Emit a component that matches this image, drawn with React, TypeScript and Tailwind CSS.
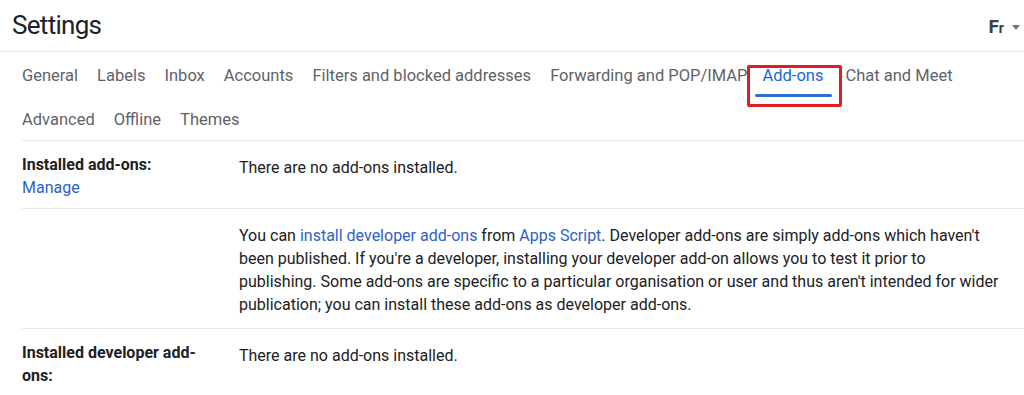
import { ReactNode } from "react"

const tabs = [
  "General",
  "Labels",
  "Inbox",
  "Accounts",
  "Filters and blocked addresses",
  "Forwarding and POP/IMAP",
  "Add-ons",
  "Chat and Meet",
  "Advanced",
  "Offline",
  "Themes",
]

function Row({ label, children, last }: { label: ReactNode; children: ReactNode; last?: boolean }) {
  return (
    <div className={`flex text-[16px] leading-[23px] ${last ? "" : "border-b border-[#e8e8e8]"}`}>
      <div className="w-[217px] shrink-0 pr-[30px] pt-[12px] pb-[9px]">{label}</div>
      <div className="flex-1 pr-[19px] pt-[15px] pb-[12px] text-[#202124]">{children}</div>
    </div>
  )
}

export default function App() {
  return (
    <div className="h-[395px] w-[1024px] overflow-hidden bg-white font-['Roboto',sans-serif]">
      <header className="flex h-[52px] items-center justify-between border-b border-[#ececec] pl-[12px] pr-[4px]">
        <h1 className="text-[26px] font-normal tracking-[-0.7px] text-[#202124]">Settings</h1>
        <div className="flex items-center gap-[8px] pt-[4px]">
          <span className="text-[19px] font-bold text-[#3c4043]">F<span className="text-[14px]">r</span></span>
          <span className="h-0 w-0 border-x-[4px] border-t-[5px] border-x-transparent border-t-[#70757a]" />
        </div>
      </header>

      <div className="ml-[22px]">
        <nav className="flex flex-wrap border-b border-[#ececec]">
          {tabs.map((t) => {
            const active = t === "Add-ons"
            return (
              <div key={t} className={`relative flex h-[44px] items-center pt-[4px] ${active ? "mr-[22px] ml-[-4px]" : "mr-[19px]"}`}>
                {active && (
                  <span className="absolute -left-[16px] -right-[19px] top-[13px] h-[42px] border-[3px] border-[#e01c24] rounded-[2px]" />
                )}
                <span className={`text-[16.5px] ${active ? "text-[#1a66d9]" : "text-[#5f6368]"}`}>{t}</span>
                {active && <span className="absolute -left-[8px] -right-[9px] bottom-[-1px] h-[3px] rounded-full bg-[#2d6fd6]" />}
              </div>
            )
          })}
        </nav>

        <Row
          label={
            <>
              <div className="font-bold text-[#202124]">Installed add-ons:</div>
              <div className="text-[#2d62c7]">Manage</div>
            </>
          }
        >
          There are no add-ons installed.
        </Row>

        <Row label={null}>
          You can <span className="text-[#2d62c7]">install developer add-ons</span> from{" "}
          <span className="text-[#2d62c7]">Apps Script</span>. Developer add-ons are simply add-ons which haven't
          been published. If you're a developer, installing your developer add-on allows you to test it prior to
          publishing. Some add-ons are specific to a particular organisation or user and thus aren't intended for wider
          publication; you can install these add-ons as developer add-ons.
        </Row>

        <Row last label={<div className="font-bold text-[#202124]">Installed developer add-ons:</div>}>
          There are no add-ons installed.
        </Row>
      </div>
    </div>
  )
}
